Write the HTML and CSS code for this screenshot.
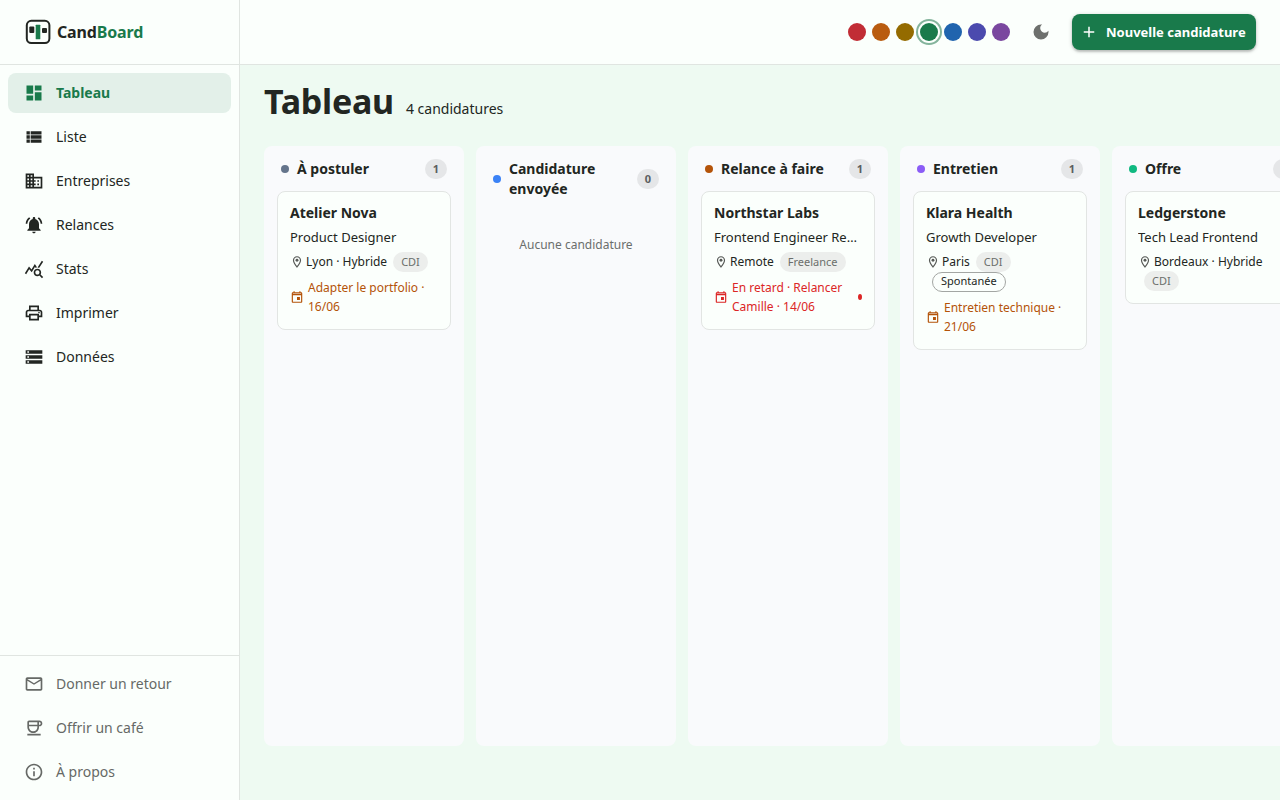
FILE: index.html
```html
<!DOCTYPE html>
<html lang="fr">
<head>
<meta charset="utf-8">
<title>CandBoard</title>
<link rel="stylesheet" href="styles.css">
</head>
<body>
<svg class="sprite" aria-hidden="true">
  <symbol id="place" viewBox="0 0 24 24"><path d="M12 2C8.13 2 5 5.13 5 9c0 5.25 7 13 7 13s7-7.75 7-13c0-3.87-3.13-7-7-7zM7 9c0-2.76 2.24-5 5-5s5 2.24 5 5c0 2.88-2.88 7.19-5 9.88C9.92 16.21 7 11.85 7 9z"/><circle cx="12" cy="9" r="2.5"/></symbol>
  <symbol id="event" viewBox="0 0 24 24"><path d="M19 4h-1V2h-2v2H8V2H6v2H5c-1.11 0-1.99.9-1.99 2L3 20c0 1.1.89 2 2 2h14c1.1 0 2-.9 2-2V6c0-1.1-.9-2-2-2zm0 16H5V9h14v11zM19 7H5V6h14v1zm-7 5h5v5h-5z"/></symbol>
</svg>
<div class="app">
  <aside class="sidebar">
    <div class="brand">
      <svg class="logo" viewBox="0 0 26 26"><rect x="1.8" y="1.8" width="22.6" height="22.2" rx="4.5" fill="none" stroke="#222622" stroke-width="2"/><rect x="4.3" y="7.5" width="5" height="6.5" rx="1" fill="#222622"/><rect x="10.7" y="5.8" width="4.6" height="14.4" rx=".5" fill="#197a4b"/><rect x="17" y="9" width="5" height="5" rx="1" fill="#222622"/></svg>
      <span class="wordmark">Cand<span class="accent">Board</span></span>
    </div>
    <nav class="nav">
      <a class="nav-item active"><svg viewBox="0 0 24 24"><path d="M3 13h8V3H3v10zm0 8h8v-6H3v6zm10 0h8V11h-8v10zm0-18v6h8V3h-8z"/></svg>Tableau</a>
      <a class="nav-item"><svg viewBox="0 0 24 24"><path d="M3 14h4v-4H3v4zm0 5h4v-4H3v4zM3 9h4V5H3v4zm5 5h13v-4H8v4zm0 5h13v-4H8v4zM8 5v4h13V5H8z"/></svg>Liste</a>
      <a class="nav-item"><svg viewBox="0 0 24 24"><path d="M12 7V3H2v18h20V7H12zM6 19H4v-2h2v2zm0-4H4v-2h2v2zm0-4H4V9h2v2zm0-4H4V5h2v2zm4 12H8v-2h2v2zm0-4H8v-2h2v2zm0-4H8V9h2v2zm0-4H8V5h2v2zm10 12h-8v-2h2v-2h-2v-2h2v-2h-2V9h8v10zm-2-8h-2v2h2v-2zm0 4h-2v2h2v-2z"/></svg>Entreprises</a>
      <a class="nav-item"><svg viewBox="0 0 24 24"><path d="M7.58 4.08L6.15 2.65C3.75 4.48 2.17 7.3 2.03 10.5h2c.15-2.65 1.51-4.97 3.55-6.42zm12.39 6.42h2c-.15-3.2-1.73-6.02-4.12-7.85l-1.42 1.43c2.02 1.45 3.39 3.77 3.54 6.42zM18 11c0-3.07-1.64-5.64-4.5-6.32V4c0-.83-.67-1.5-1.5-1.5s-1.5.67-1.5 1.5v.68C7.63 5.36 6 7.92 6 11v5l-2 2v1h16v-1l-2-2v-5zm-6 11c.14 0 .27-.01.4-.04.65-.14 1.18-.58 1.44-1.18.1-.24.15-.5.15-.78h-4c.01 1.1.9 2 2.01 2z"/></svg>Relances</a>
      <a class="nav-item"><svg viewBox="0 0 24 24"><path d="M19.88 18.47c.44-.7.7-1.51.7-2.39 0-2.49-2.01-4.5-4.5-4.5s-4.5 2.01-4.5 4.5 2.01 4.5 4.49 4.5c.88 0 1.7-.26 2.39-.7L21.58 23 23 21.58l-3.12-3.11zm-3.8.11c-1.38 0-2.5-1.12-2.5-2.5s1.12-2.5 2.5-2.5 2.5 1.12 2.5 2.5-1.12 2.5-2.5 2.5zm-.36-8.5c-.74.02-1.45.18-2.1.45l-.55-.83-3.8 6.18-3.01-3.52-3.63 5.81L1 17l5-8 3 3.5L13 6l2.72 4.08zm2.59.5c-.64-.28-1.33-.45-2.05-.49L21.38 2 23 3.18l-4.69 7.4z"/></svg>Stats</a>
      <a class="nav-item"><svg viewBox="0 0 24 24"><path d="M19 8h-1V3H6v5H5c-1.66 0-3 1.34-3 3v6h4v4h12v-4h4v-6c0-1.66-1.34-3-3-3zM8 5h8v3H8V5zm8 12v2H8v-4h8v2zm2-2v-2H6v2H4v-4c0-.55.45-1 1-1h14c.55 0 1 .45 1 1v4h-2z"/><circle cx="18" cy="11.5" r="1"/></svg>Imprimer</a>
      <a class="nav-item"><svg viewBox="0 0 24 24"><path d="M2 20h20v-4H2v4zm2-3h2v2H4v-2zM2 4v4h20V4H2zm4 3H4V5h2v2zm-4 7h20v-4H2v4zm2-3h2v2H4v-2z"/></svg>Données</a>
    </nav>
    <nav class="nav nav-bottom">
      <a class="nav-item"><svg viewBox="0 0 24 24"><path d="M22 6c0-1.1-.9-2-2-2H4c-1.1 0-2 .9-2 2v12c0 1.1.9 2 2 2h16c1.1 0 2-.9 2-2V6zm-2 0l-8 5-8-5h16zm0 12H4V8l8 5 8-5v10z"/></svg>Donner un retour</a>
      <a class="nav-item"><svg viewBox="0 0 24 24"><path d="M18.5 3H6c-1.1 0-2 .9-2 2v5.71c0 3.83 2.95 7.18 6.78 7.29 3.96.12 7.22-3.06 7.22-7v-1h.5c1.93 0 3.5-1.57 3.5-3.5S20.43 3 18.5 3zM16 5v3H6V5h10zm-5.29 10.99C8.06 15.8 6 13.5 6 10.8V10h10v1c0 2.86-2.4 5.2-5.29 4.99zM18.5 8H18V5h.5c.83 0 1.5.67 1.5 1.5S19.33 8 18.5 8zM4 19h16v2H4v-2z"/></svg>Offrir un café</a>
      <a class="nav-item"><svg viewBox="0 0 24 24"><path d="M11 7h2v2h-2zm0 4h2v6h-2zm1-9C6.48 2 2 6.48 2 12s4.48 10 10 10 10-4.48 10-10S17.52 2 12 2zm0 18c-4.41 0-8-3.59-8-8s3.59-8 8-8 8 3.59 8 8-3.59 8-8 8z"/></svg>À propos</a>
    </nav>
  </aside>
  <div class="content">
    <header class="topbar">
      <div class="swatches">
        <i class="swatch red"></i><i class="swatch orange"></i><i class="swatch olive"></i><i class="swatch green selected"></i><i class="swatch blue"></i><i class="swatch indigo"></i><i class="swatch violet"></i>
      </div>
      <svg class="moon" viewBox="0 0 24 24"><path d="M12 3a9 9 0 1 0 9 9c0-.46-.04-.92-.1-1.36a5.389 5.389 0 0 1-4.4 2.26 5.403 5.403 0 0 1-3.14-9.8c-.44-.06-.9-.1-1.36-.1z"/></svg>
      <button class="primary"><svg viewBox="0 0 24 24"><path d="M19 13h-6v6h-2v-6H5v-2h6V5h2v6h6v2z"/></svg>Nouvelle candidature</button>
    </header>
    <main class="page">
      <div class="heading"><h1>Tableau</h1><span>4 candidatures</span></div>
      <div class="board">
        <section class="column">
          <header class="column-head"><i class="dot slate"></i><h2>À postuler</h2><b class="count">1</b></header>
          <article class="card">
            <h3>Atelier Nova</h3><p class="role">Product Designer</p>
            <div class="meta"><span class="place"><svg><use href="#place"/></svg>Lyon · Hybride</span><span class="chip">CDI</span></div>
            <div class="action"><svg><use href="#event"/></svg><span>Adapter le portfolio · 16/06</span></div>
          </article>
        </section>
        <section class="column">
          <header class="column-head"><i class="dot azure"></i><h2>Candidature envoyée</h2><b class="count">0</b></header>
          <p class="empty">Aucune candidature</p>
        </section>
        <section class="column">
          <header class="column-head"><i class="dot rust"></i><h2>Relance à faire</h2><b class="count">1</b></header>
          <article class="card">
            <h3>Northstar Labs</h3><p class="role">Frontend Engineer React</p>
            <div class="meta"><span class="place"><svg><use href="#place"/></svg>Remote</span><span class="chip">Freelance</span></div>
            <div class="action late"><svg><use href="#event"/></svg><span>En retard · Relancer Camille · 14/06</span><i class="alert"></i></div>
          </article>
        </section>
        <section class="column">
          <header class="column-head"><i class="dot purple"></i><h2>Entretien</h2><b class="count">1</b></header>
          <article class="card">
            <h3>Klara Health</h3><p class="role">Growth Developer</p>
            <div class="meta"><span class="place"><svg><use href="#place"/></svg>Paris</span><span class="chip">CDI</span><span class="chip outline">Spontanée</span></div>
            <div class="action"><svg><use href="#event"/></svg><span>Entretien technique · 21/06</span></div>
          </article>
        </section>
        <section class="column">
          <header class="column-head"><i class="dot emerald"></i><h2>Offre</h2><b class="count">1</b></header>
          <article class="card">
            <h3>Ledgerstone</h3><p class="role">Tech Lead Frontend</p>
            <div class="meta"><span class="place"><svg><use href="#place"/></svg>Bordeaux · Hybride</span><span class="chip">CDI</span></div>
          </article>
        </section>
      </div>
    </main>
  </div>
</div>
</body>
</html>
```
FILE: styles.css
```css
* { box-sizing: border-box; }
body { margin: 0; font: 14px/20px "Noto Sans", sans-serif; color: #222622; background: #eefaf2; overflow: hidden; }
h1, h2, h3, p { margin: 0; }
svg { fill: currentColor; flex: none; }
.sprite { display: none; }
.app { display: flex; height: 800px; }

.sidebar { width: 240px; flex: none; display: flex; flex-direction: column; background: #fbfffc; border-right: 1px solid #e0e5e1; }
.brand { height: 65px; flex: none; display: flex; align-items: center; gap: 6px; padding: 0 0 1px 25px; border-bottom: 1px solid #e0e5e1; }
.logo { width: 26px; height: 26px; }
.wordmark { font-size: 16px; font-weight: 700; letter-spacing: -0.16px; }
.accent { color: #197a4b; }
.nav { display: flex; flex-direction: column; gap: 4px; padding: 8px; }
.nav-item { display: flex; align-items: center; gap: 12px; height: 40px; padding: 0 16px; border-radius: 8px; }
.nav-item svg { width: 20px; height: 20px; }
.nav-item.active { color: #197a4b; background: #e3f0e9; font-weight: 700; }
.nav-bottom { margin-top: auto; border-top: 1px solid #e0e5e1; color: #666966; }

.content { flex: 1; min-width: 0; }
.topbar { height: 65px; display: flex; align-items: center; justify-content: flex-end; padding: 0 24px 1px 0; background: #fbfffc; border-bottom: 1px solid #e0e5e1; }
.swatches { display: flex; gap: 6px; }
.swatch { width: 18px; height: 18px; border-radius: 50%; }
.selected { box-shadow: 0 0 0 2px #fbfffc, 0 0 0 4px #84b49c; }
.red { background: #c12d35; }
.orange { background: #b95c10; }
.olive { background: #946b00; }
.green { background: #197a4b; }
.blue { background: #2064ae; }
.indigo { background: #4b4aae; }
.violet { background: #7a479f; }
.moon { width: 20px; height: 20px; margin: 0 21px; color: #6d706d; }
.primary { display: flex; align-items: center; gap: 8px; width: 184px; height: 36px; padding: 0 0 0 8px; border: 0; border-radius: 8px; background: #197a4b; color: #fff; font: 700 13px/20px "Noto Sans", sans-serif; white-space: nowrap; box-shadow: 0 1px 4px rgba(0,0,0,.2), 0 2px 2px rgba(0,0,0,.14); }
.primary svg { width: 18px; height: 18px; }

.page { padding: 16px 0 0 24px; }
.heading { display: flex; align-items: baseline; gap: 12px; height: 65px; }
.heading h1 { font-size: 34px; line-height: 40px; letter-spacing: -.25px; }
.board { display: flex; gap: 12px; height: 600px; }
.column { width: 200px; flex: none; padding: 13px; border-radius: 8px; background: #f9fafc; }
.column-head { display: flex; align-items: center; gap: 8px; padding: 0 4px; margin-bottom: 12px; }
.column-head h2 { flex: 1; font-size: 14px; line-height: 20px; }
.dot { width: 8px; height: 8px; border-radius: 50%; }
.slate { background: #64748b; }
.azure { background: #3b82f6; }
.rust { background: #b45309; }
.purple { background: #8b5cf6; }
.emerald { background: #10b981; }
.count { width: 22px; height: 20px; border-radius: 10px; background: #e5e6e8; color: #5b5e60; font-size: 11px; line-height: 20px; text-align: center; }
.empty { margin-top: 36px; text-align: center; font-size: 12px; color: #6b6e6c; }

.card { padding: 11px 12px 12px; border: 1px solid #e2e5e3; border-radius: 8px; background: #fbfffc; }
.card h3 { font-size: 14px; line-height: 20px; }
.role { margin: 4px 0 5px; font-size: 13px; line-height: 20px; white-space: nowrap; overflow: hidden; text-overflow: ellipsis; }
.meta { display: flex; flex-wrap: wrap; min-height: 19px; font-size: 12px; }
.meta:last-child { margin-bottom: 1px; }
.place { display: flex; align-items: center; gap: 2px; height: 20px; margin-bottom: -1px; white-space: nowrap; }
.place svg, .action svg { width: 14px; height: 14px; }
.place svg { color: #555855; }
.chip { height: 20px; margin-left: 6px; padding: 0 8px; border-radius: 10px; background: #eceeec; color: #6b6e6b; font-size: 11px; line-height: 19px; }
.place + .chip { margin-bottom: -1px; }
.outline { margin-top: 1px; border: 1px solid #a3a6a3; background: none; color: #222622; line-height: 16px; }
.action { display: flex; align-items: center; gap: 4px; margin-top: 7px; padding-bottom: 1px; font-size: 12px; line-height: 19.2px; color: #b45309; }
.meta:has(.outline) + .action { margin-top: 6px; }
.late { color: #dc2626; }
.alert { width: 4px; height: 6px; flex: none; margin-left: auto; border-radius: 50%; background: #dc2626; }
```
